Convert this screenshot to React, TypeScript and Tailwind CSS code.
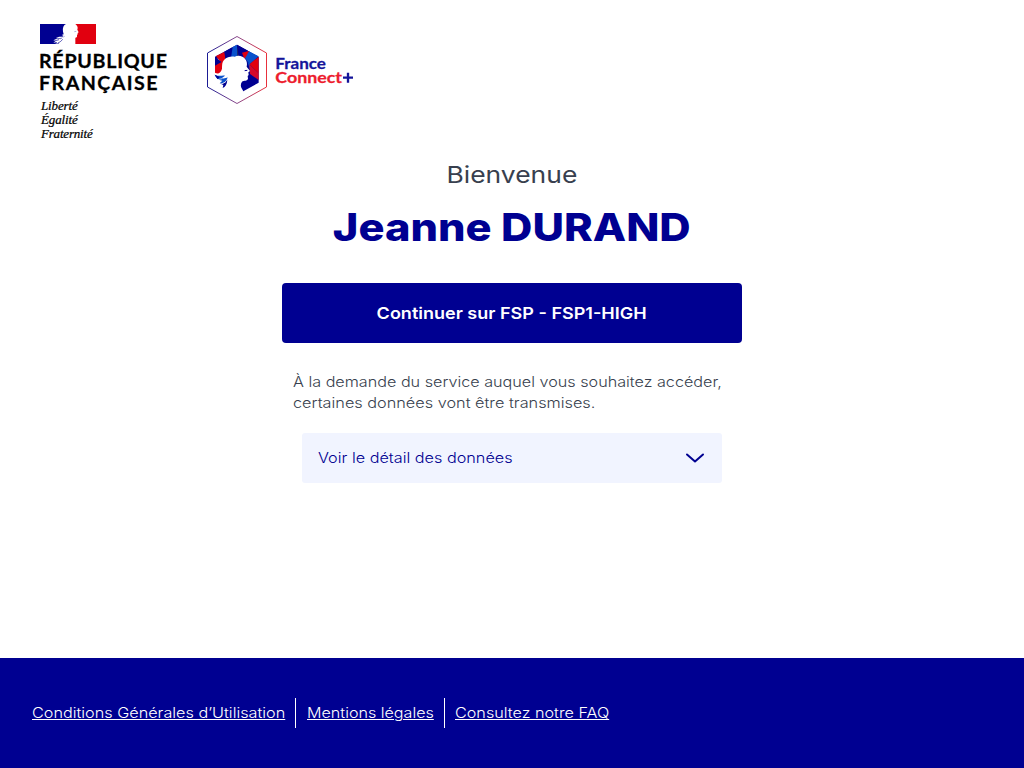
import type { ReactNode } from "react";

function RepubliqueLogo() {
  return (
    <svg width="150" height="130" viewBox="0 0 450 390" role="img" aria-label="République Française">
      <path fill="#000091" d="M30 27h82v60H30z" />
      <path fill="#e1000f" d="M136 27h62v60h-62z" />
      <path
        fill="#fff"
        d="M108 27h27c5 3 8 7 8 12l-1 5 4 8-3 2 0 4-2 2 0 5c-2 4-8 2-10 4l0 18H88c-4-2-8-1-13 0l7-5c-5-1-7 0-12 1l8-6-8-1c5-3 9-3 13-6l-5-1c8-4 13-5 19-3l3-4-5-2 6-2-2-8c-2-12 2-20 9-23z"
      />
      <path fill="none" stroke="#000091" strokeWidth="2" d="M76 77l11-3M82 70c6 0 9 2 13 0M84 84c6-3 9-5 14-11" />
      <path fill="none" stroke="#8a8ac8" strokeWidth="2" d="M92 66c5-1 8 1 12-2M133 50l6-1" />
      <g fontFamily="Lato, sans-serif" fontWeight="700" fontSize="59" fill="#000" stroke="#000" strokeWidth="0.8">
        <text x="27" y="160" textLength="384" lengthAdjust="spacing">RÉPUBLIQUE</text>
        <text x="27" y="224" textLength="356" lengthAdjust="spacing">FRANÇAISE</text>
      </g>
      <g fontFamily="'Liberation Serif', serif" fontStyle="italic" fontSize="39" fill="#000" stroke="#000" strokeWidth="0.7">
        <text x="33" y="285" textLength="110">Liberté</text>
        <text x="33" y="326" textLength="110">Égalité</text>
        <text x="33" y="368" textLength="155">Fraternité</text>
      </g>
    </svg>
  );
}

function FranceConnectLogo() {
  return (
    <svg width="165" height="80" viewBox="0 0 495 240" role="img" aria-label="FranceConnect+">
      <defs>
        <linearGradient id="outline" x1="0" x2="1" y1="0" y2="0">
          <stop offset="0" stopColor="#1b1b94" />
          <stop offset="0.5" stopColor="#8a4a8c" />
          <stop offset="1" stopColor="#e8303c" />
        </linearGradient>
      </defs>
      <path d="M111 19.500L199.500 69v102L111 220.500 22.500 171V69z" fill="#fff" stroke="url(#outline)" strokeWidth="3" />
      <path fill="#000091" d="M111 44L176 80v78l-46 26-26-8 6-90H45V80z" />
      <path fill="#e1000f" d="M48 78l26-13 4 30-12 8z" />
      <path fill="#000091" d="M45 80l24 20-24 10z" />
      <path fill="#e1000f" d="M45 107l26-15-2 34-10 8-14-6z" />
      <path fill="#000091" d="M73 65l24-13 2 34H76z" />
      <path fill="#0a52cc" d="M98 51l13-7v40H93z" />
      <path fill="#1b2a70" d="M111 44l8 36h-8z" />
      <path fill="#000091" d="M111 44l33 18-14 22-14-6z" />
      <path fill="#e1000f" d="M126 68l20-5 4 27-18-6z" />
      <path fill="#0a52cc" d="M147 64l29 15-27 24-14-18z" />
      <path fill="#e1000f" d="M176 80v50l-28-27z" />
      <path fill="#0a52cc" d="M142 94l7 9 5 30z" />
      <path fill="#d4082a" d="M148 103l28 27v20l-26-18z" />
      <path
        fill="#fff"
        d="M72 90C82 79 94 79 104 80C116 74 130 79 136 88C141 94 142 102 140 110L150 123L145 127L146 135L143 138L144 146C142 154 132 150 126 155C121 161 122 171 125 175L130 184L111 193L62 171L78 160L82 148L74 140L44 131C56 133 64 126 66 116C66 106 66 96 72 90z"
      />
      <path fill="#0a52cc" d="M44 134c14 7 22 1 31 3l-10 8c8 2 13-1 18-3-3 13-13 20-24 18l8-8c-8-1-18-5-23-18z" />
      <path fill="#000091" d="M44 134l15 7-6 7zM61 161c9 1 15-3 21-12-1 14-6 22-14 25l2-9z" />
      <path stroke="#fff" strokeWidth="2" d="M49 150l17-4M63 163l15-8" />
      <path stroke="#000091" strokeWidth="3" d="M134 122l8-1" />
      <g fontFamily="Lato, sans-serif" fontWeight="700" strokeWidth="0.8">
        <text x="226" y="117" fontSize="46" textLength="152" lengthAdjust="spacingAndGlyphs" fill="#14149a" stroke="#14149a">
          France
        </text>
        <text x="226" y="158" fontSize="45" textLength="200" lengthAdjust="spacingAndGlyphs" fill="#ed1c2e" stroke="#ed1c2e">
          Connect
        </text>
      </g>
      <path d="M429 143h30M444 128v30" stroke="#14149a" strokeWidth="7" />
    </svg>
  );
}

function FooterLink({ children, width, scale }: { children: ReactNode; width: string; scale: string }) {
  return (
    <a href="#" className={`block whitespace-nowrap ${width}`}>
      <span className={`inline-block origin-left underline decoration-1 underline-offset-1 ${scale}`}>{children}</span>
    </a>
  );
}

export default function App() {
  return (
    <div className="flex h-screen flex-col overflow-hidden bg-white font-['Inter',sans-serif]">
      <header className="flex h-40 shrink-0 items-start pt-[15px] pl-[30px]">
        <RepubliqueLogo />
        <div className="pt-[15px] pl-5">
          <FranceConnectLogo />
        </div>
      </header>

      <main className="flex grow flex-col items-center">
        <h1 className="flex flex-col items-center whitespace-nowrap">
          <span className="scale-x-[1.15] text-[23px] leading-[30px] font-normal text-[#383f4e]">Bienvenue</span>
          <span className="mt-[13px] scale-x-[1.127] text-[38.5px] leading-[48px] font-extrabold text-[#000091]">
            Jeanne DURAND
          </span>
        </h1>

        <button className="mt-8 flex h-[60px] w-[460px] items-center justify-center rounded bg-[#000091] text-[16.5px] font-semibold text-white">
          <span className="scale-x-[1.092] whitespace-nowrap">Continuer sur FSP - FSP1-HIGH</span>
        </button>

        <p className="mt-7 w-[439px] text-[14.5px] leading-[21px] font-[350] text-[#383f4e]">
          <span className="block w-[390px] origin-left scale-x-[1.115] whitespace-nowrap">
            À la demande du service auquel vous souhaitez accéder,
          </span>
          <span className="block w-[390px] origin-left scale-x-[1.122] whitespace-nowrap">
            certaines données vont être transmises.
          </span>
        </p>

        <button className="mt-5 flex h-[50px] w-[420px] items-center justify-between rounded-[3px] bg-[#f1f4ff] pr-[17px] pl-4 text-[14.5px] font-[350] text-[#000091]">
          <span className="origin-left scale-x-[1.119] whitespace-nowrap">Voir le détail des données</span>
          <svg width="20" height="12" viewBox="0 0 20 12" fill="none" stroke="#000091" strokeWidth="2" strokeLinecap="round" strokeLinejoin="round">
            <path d="M2 2.500l8 7 8-7" />
          </svg>
        </button>
      </main>

      <footer className="flex h-[110px] shrink-0 items-center bg-[#000091] pl-8 text-[14.5px] font-[350] text-white">
        <FooterLink width="w-[253px]" scale="scale-x-[1.118]">Conditions Générales d’Utilisation</FooterLink>
        <span className="mr-[11px] ml-[10px] h-[30px] w-px bg-white" />
        <FooterLink width="w-[127px]" scale="scale-x-[1.111]">Mentions légales</FooterLink>
        <span className="mr-[10px] ml-[10px] h-[30px] w-px bg-white" />
        <FooterLink width="w-[154px]" scale="scale-x-[1.116]">Consultez notre FAQ</FooterLink>
      </footer>
    </div>
  );
}
